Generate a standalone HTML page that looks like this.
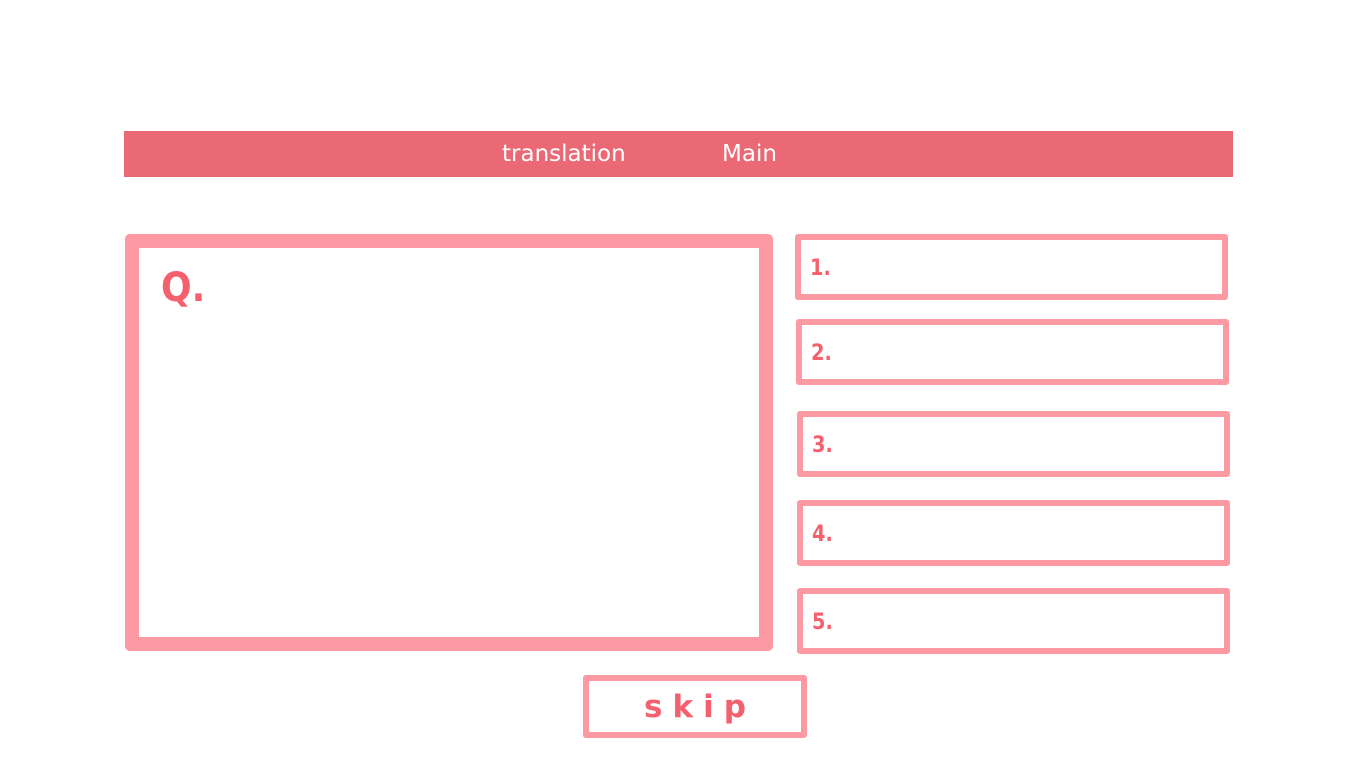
<!DOCTYPE html>
<html><head><style>
body{margin:0;width:1366px;height:768px;background:#fff;position:relative;overflow:hidden;font-family:"DejaVu Sans","Liberation Sans",sans-serif}
.nav{position:absolute;left:124px;top:131px;width:1109px;height:46px;background:#eb6975;color:#fff;font-size:23px}
.nav span{position:absolute;top:10px}
.q{position:absolute;left:125px;top:234px;width:620px;height:389px;border:14px solid #fd99a2;border-radius:5px;background:#fff}
.q b{position:absolute;left:22px;top:17px;color:#f5606e;font-size:40px;transform:scaleX(.9);transform-origin:left}
.a{position:absolute;width:421px;height:54px;border:6px solid #fd99a2;border-radius:3px;box-sizing:content-box}
.a b{position:absolute;left:9px;top:16px;color:#f5606e;font-size:22px;transform:scaleX(.88);transform-origin:left}
.skip{position:absolute;left:583px;top:675px;width:212px;height:51px;border:6px solid #fd99a2;border-radius:3px;text-align:center;color:#f5606e;font-weight:bold;font-size:31px;line-height:52px;letter-spacing:10px;text-indent:10px}
</style></head><body>
<div class="nav"><span style="left:378px">translation</span><span style="left:598px">Main</span></div>
<div class="q"><b>Q.</b></div>
<div class="a" style="left:795px;top:234px"><b>1.</b></div>
<div class="a" style="left:796px;top:319px"><b>2.</b></div>
<div class="a" style="left:797px;top:411px"><b>3.</b></div>
<div class="a" style="left:797px;top:500px"><b>4.</b></div>
<div class="a" style="left:797px;top:588px"><b>5.</b></div>
<div class="skip">skip</div>
</body></html>
